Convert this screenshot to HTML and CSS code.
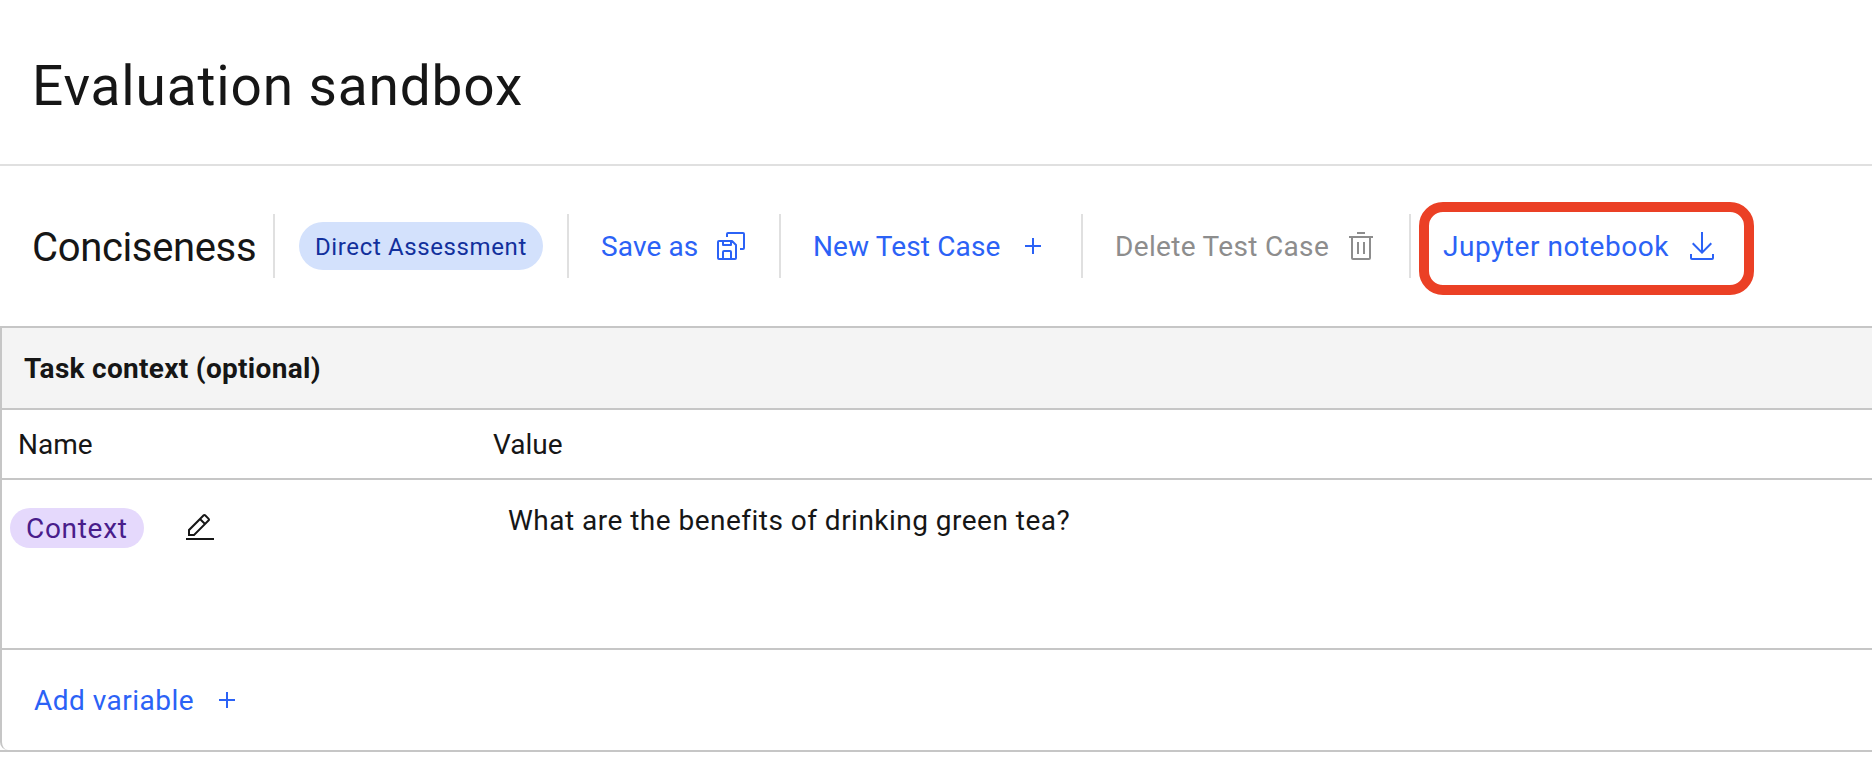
FILE: index.html
```html
<!DOCTYPE html>
<html lang="en">
<head>
<meta charset="utf-8">
<title>Evaluation sandbox</title>
<link rel="stylesheet" href="styles.css">
</head>
<body>
<header class="page-header"><h1 class="page-title">Evaluation sandbox</h1></header>
<div class="toolbar">
  <div class="cell cell-name"><h2 class="case-name">Conciseness</h2></div>
  <div class="cell cell-type"><span class="tag tag-blue"><span class="t-direct">Direct Assessment</span></span></div>
  <button class="cell action cell-save"><span class="t-save">Save as</span>
    <svg class="icon" viewBox="0 0 32 32"><g fill="none" stroke="currentColor" stroke-width="2" stroke-linejoin="round"><path d="M12 7V4A1 1 0 0 1 13 3H28A1 1 0 0 1 29 4V18A1 1 0 0 1 28 19H25"/><path d="M4 11H17L21 15V28A1 1 0 0 1 20 29H4A1 1 0 0 1 3 28V12A1 1 0 0 1 4 11ZM8 11V15H16V11M8 29V22A1 1 0 0 1 9 21H15A1 1 0 0 1 16 22V29"/></g></svg></button>
  <button class="cell action cell-new"><span class="t-new">New Test Case</span>
    <svg class="icon" viewBox="0 0 32 32"><path d="M17 15V8H15V15H8V17H15V24H17V17H24V15Z"/></svg></button>
  <button class="cell action cell-delete" disabled><span class="t-delete">Delete Test Case</span>
    <svg class="icon" viewBox="0 0 32 32"><path d="M12 12H14V24H12ZM18 12H20V24H18ZM12 2H20V4H12Z"/><path fill-rule="evenodd" d="M4 6V8H6V28A2 2 0 0 0 8 30H24A2 2 0 0 0 26 28V8H28V6ZM8 28V8H24V28Z"/></svg></button>
  <div class="highlight"><button class="action"><span class="t-notebook">Jupyter notebook</span>
    <svg class="icon" viewBox="0 0 32 32"><path d="M26 24V28H6V24H4V28A2 2 0 0 0 6 30H26A2 2 0 0 0 28 28V24ZM26 14L24.59 12.59 17 20.17V2H15V20.17L7.41 12.59 6 14 16 24Z"/></svg></button></div>
</div>
<section class="panel">
  <div class="panel-body">
    <div class="row panel-head"><h3 class="t-task">Task context (optional)</h3></div>
    <div class="row columns"><span class="col-name">Name</span><span>Value</span></div>
    <div class="row variable">
      <div class="variable-name"><span class="tag tag-purple"><span class="t-context">Context</span></span>
        <svg class="icon icon-edit" viewBox="0 0 32 32"><path d="M2 26H30V28H2Z"/><path fill-rule="evenodd" d="M25.4 9C26.2 8.2 26.2 7 25.4 6.2L21.8 2.6C21 1.8 19.8 1.8 19 2.6L4 17.6V24H10.4ZM20.4 4L24 7.6 21 10.6 17.4 7ZM6 22V18.4L16 8.4 19.6 12 9.6 22Z"/></svg></div>
      <p class="variable-value">What are the benefits of drinking green tea?</p>
    </div>
    <div class="row footer"><button class="action"><span class="t-add">Add variable</span>
      <svg class="icon" viewBox="0 0 32 32"><path d="M17 15V8H15V15H8V17H15V24H17V17H24V15Z"/></svg></button></div>
  </div>
</section>
</body>
</html>
```
FILE: styles.css
```css
* { box-sizing: border-box; }
body { margin: 0; background: #fff; color: #161616; font: 28px/36px Roboto, sans-serif; overflow: hidden; }
h1, h2, h3, p { margin: 0; font-weight: 400; white-space: nowrap; }
span { white-space: nowrap; }
button { margin: 0; padding: 0; border: 0; background: none; font: inherit; color: inherit; }
.page-header { height: 166px; padding: 50px 0 0 32px; border-bottom: 2px solid #e0e0e0; }
.page-title { font-size: 55px; line-height: 72px; letter-spacing: 0.85px; }
.toolbar { height: 160px; display: flex; align-items: flex-start; padding-top: 36px; }
.cell { height: 64px; margin-top: 12px; display: flex; align-items: center; border-right: 2px solid #e0e0e0; }
.cell-name { width: 275px; padding-left: 32px; }
.case-name { font-size: 40px; line-height: 52px; padding-top: 4px; letter-spacing: -0.35px; }
.cell-type { width: 294px; padding-left: 24px; }
.tag { display: flex; align-items: center; }
.tag span { padding-top: 2px; }
.tag-blue { width: 244px; height: 48px; padding-left: 16px; border-radius: 24px; background: #d3e1fc; color: #12309c; font-size: 24px; }
.t-direct { letter-spacing: 0.62px; }
.action { display: flex; align-items: center; justify-content: space-between; color: #2b62f6; text-align: left; }
.action span { padding-top: 2px; }
.cell.action { padding-left: 32px; }
.cell-save { width: 212px; padding-right: 32px; }
.cell-new { width: 302px; padding-right: 32px; }
.action.cell-delete { width: 328px; padding-right: 32px; color: #8d8d8d; }
.t-save, .t-new { letter-spacing: 0.13px; }
.t-delete { letter-spacing: 0.33px; }
.t-notebook { letter-spacing: 0.53px; }
.t-add { letter-spacing: 0.48px; }
.t-context { letter-spacing: 0.7px; }
.icon { width: 32px; height: 32px; flex: none; fill: currentColor; }
.highlight { width: 335px; height: 93px; margin-left: 8px; padding: 2px 26px 0 14px; border: 10px solid #eb4025; border-radius: 24px; }
.highlight .action { width: 275px; height: 64px; }
.panel { height: 426px; border: solid #c6c6c6; border-width: 2px 0; }
.panel-body { height: 422px; border-left: 2px solid #c6c6c6; border-bottom-left-radius: 8px; }
.row { border-bottom: 2px solid #c6c6c6; }
.panel-head { height: 82px; padding: 23px 0 0 22px; background: #f4f4f4; }
.t-task { font-size: 28px; font-weight: 700; letter-spacing: 0.3px; }
.columns { height: 70px; padding: 17px 0 0 16px; display: flex; }
.col-name { width: 475px; }
.variable { height: 170px; display: flex; }
.variable-name { width: 506px; padding: 28px 0 0 8px; display: flex; align-items: flex-start; }
.tag-purple { width: 134px; height: 40px; padding-left: 16px; border-radius: 20px; background: #e5d9fc; color: #491d8b; }
.icon-edit { margin: 4px 0 0 40px; }
.variable-value { padding-top: 23px; letter-spacing: 0.48px; }
.footer { height: 100px; border: 0; padding: 32px 0 0 32px; }
.footer .action { width: 209px; height: 36px; }
```
